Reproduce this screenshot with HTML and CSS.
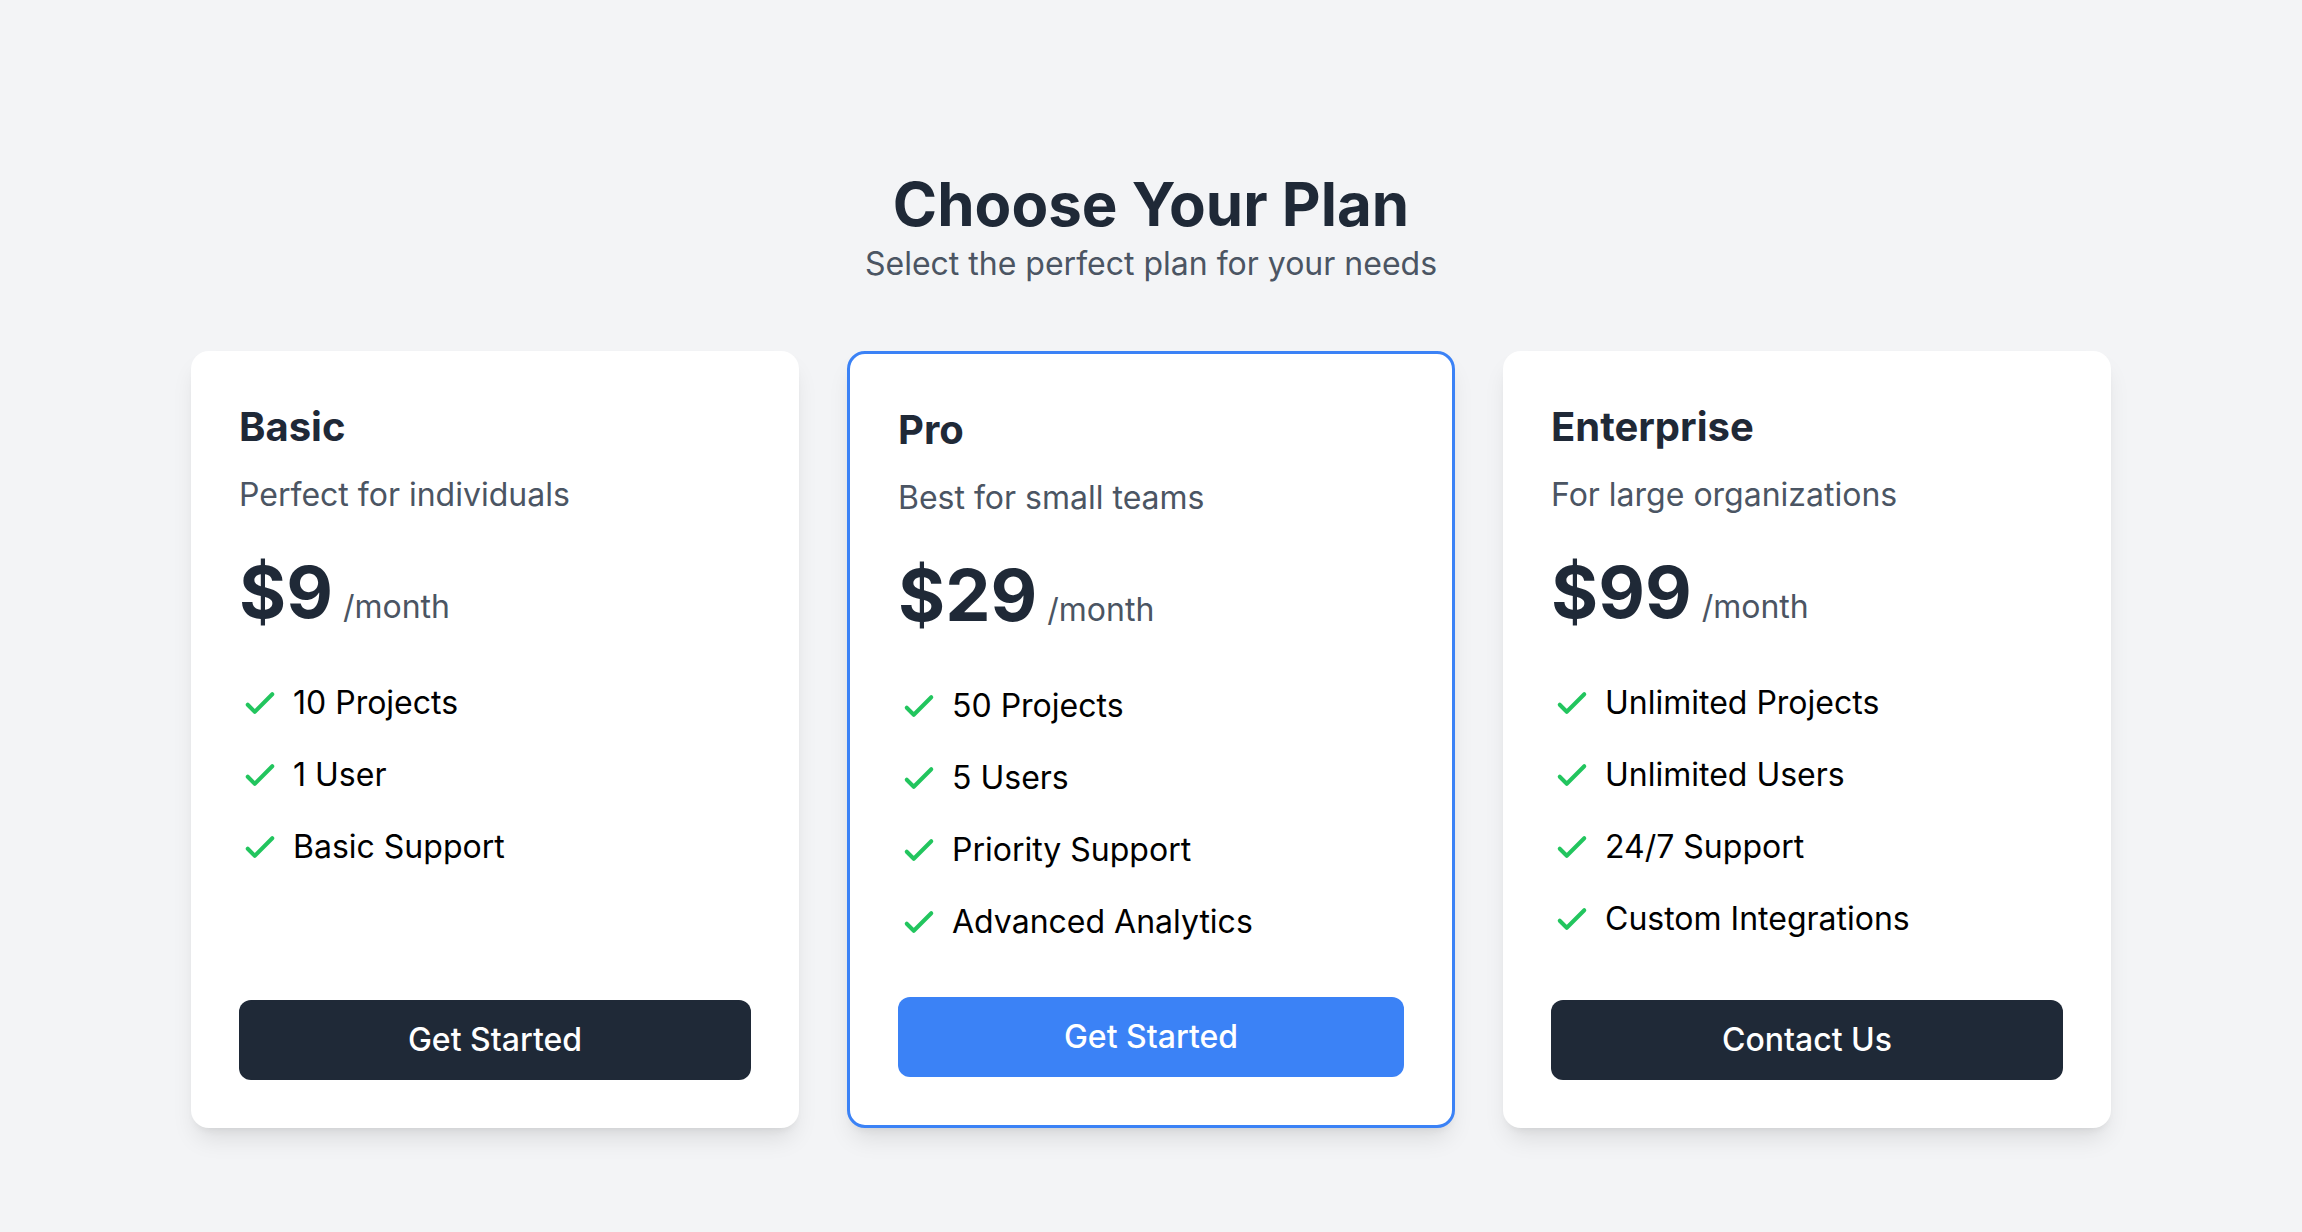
FILE: index.html
```html
<!DOCTYPE html>
<html lang="en">
<head>
  <meta charset="UTF-8" />
  <meta name="viewport" content="width=device-width, initial-scale=1.0"/>
  <title>Pricing</title>
  <link rel="stylesheet" href="styles.css">
</head>
<body>

  <div class="page">
    <div class="intro">
      <h1>Choose Your Plan</h1>
      <p>Select the perfect plan for your needs</p>
    </div>

    <div class="plans">
      <div class="card">
        <h2>Basic</h2>
        <p class="desc">Perfect for individuals</p>
        <div class="price">$9<span>/month</span></div>
        <ul class="features">
          <li><svg viewBox="0 0 24 24"><path d="M5 13l4 4L19 7"/></svg>10 Projects</li>
          <li><svg viewBox="0 0 24 24"><path d="M5 13l4 4L19 7"/></svg>1 User</li>
          <li><svg viewBox="0 0 24 24"><path d="M5 13l4 4L19 7"/></svg>Basic Support</li>
        </ul>
        <button>Get Started</button>
      </div>

      <div class="card featured">
        <h2>Pro</h2>
        <p class="desc">Best for small teams</p>
        <div class="price">$29<span>/month</span></div>
        <ul class="features">
          <li><svg viewBox="0 0 24 24"><path d="M5 13l4 4L19 7"/></svg>50 Projects</li>
          <li><svg viewBox="0 0 24 24"><path d="M5 13l4 4L19 7"/></svg>5 Users</li>
          <li><svg viewBox="0 0 24 24"><path d="M5 13l4 4L19 7"/></svg>Priority Support</li>
          <li><svg viewBox="0 0 24 24"><path d="M5 13l4 4L19 7"/></svg>Advanced Analytics</li>
        </ul>
        <button>Get Started</button>
      </div>

      <div class="card">
        <h2>Enterprise</h2>
        <p class="desc">For large organizations</p>
        <div class="price">$99<span>/month</span></div>
        <ul class="features">
          <li><svg viewBox="0 0 24 24"><path d="M5 13l4 4L19 7"/></svg>Unlimited Projects</li>
          <li><svg viewBox="0 0 24 24"><path d="M5 13l4 4L19 7"/></svg>Unlimited Users</li>
          <li><svg viewBox="0 0 24 24"><path d="M5 13l4 4L19 7"/></svg>24/7 Support</li>
          <li><svg viewBox="0 0 24 24"><path d="M5 13l4 4L19 7"/></svg>Custom Integrations</li>
        </ul>
        <button>Contact Us</button>
      </div>
    </div>
  </div>

</body>
</html>
```

FILE: styles.css
```css
body {
  font-family: 'Inter', 'Noto Sans', sans-serif;
  margin: 0;
  background-color: #f3f4f6;
  color: #1f2937;
}

.page {
  max-width: 1920px;
  margin: 0 auto;
  padding: 168px 0 100px;
}

.intro {
  text-align: center;
  margin-bottom: 63px;
}

.intro h1 {
  margin: 0;
  font-size: 60px;
  line-height: 72px;
  font-weight: 700;
}

.intro p {
  margin: 0;
  font-size: 32px;
  line-height: 48px;
  color: #4b5563;
}

.plans {
  display: grid;
  grid-template-columns: repeat(3, 1fr);
  gap: 48px;
}

.card {
  display: flex;
  flex-direction: column;
  background: white;
  padding: 48px;
  border-radius: 18px;
  box-shadow: 0 15px 25px -5px rgba(0,0,0,0.1), 0 6px 10px -6px rgba(0,0,0,0.1);
}

.card.featured {
  border: 3px solid #3b82f6;
}

.card h2 {
  margin: 0 0 16px;
  font-size: 40px;
  line-height: 56px;
  font-weight: 700;
}

.desc {
  margin: 0 0 37px;
  font-size: 32px;
  line-height: 48px;
  color: #4b5563;
}

.price {
  font-size: 72px;
  line-height: 72px;
  font-weight: 700;
  margin-bottom: 51px;
}

.price span {
  margin-left: 10px;
  font-size: 32px;
  line-height: 1;
  font-weight: 400;
  color: #4b5563;
}

.features {
  list-style: none;
  margin: 0 0 51px;
  padding: 0;
  display: flex;
  flex-direction: column;
  gap: 24px;
}

.features li {
  display: flex;
  align-items: center;
  gap: 12px;
  font-size: 32px;
  line-height: 48px;
  color: #000;
}

.features svg {
  width: 42px;
  height: 42px;
  flex-shrink: 0;
  fill: none;
  stroke: #22c55e;
  stroke-width: 2.3;
  stroke-linecap: round;
  stroke-linejoin: round;
}

button {
  margin-top: auto;
  width: 100%;
  background-color: #1f2937;
  color: white;
  border: none;
  padding: 16px;
  font-family: inherit;
  font-size: 32px;
  line-height: 48px;
  font-weight: 500;
  border-radius: 12px;
  cursor: pointer;
}

.featured button {
  background-color: #3b82f6;
}
```
